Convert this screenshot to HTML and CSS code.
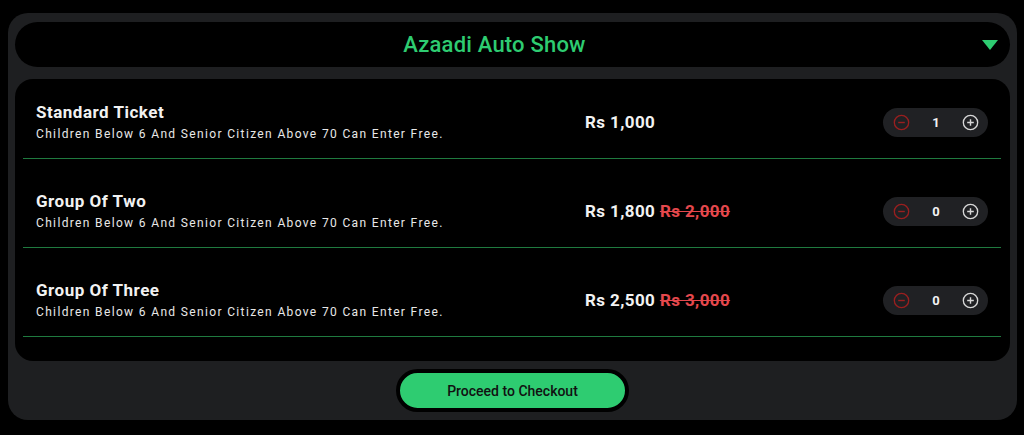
FILE: index.html
```html
<!DOCTYPE html>
<html>
<head>
<meta charset="utf-8">
<link rel="stylesheet" href="styles.css">
</head>
<body>
<div class="shell">
  <div class="event-bar">
    <span class="event-title">Azaadi Auto Show</span>
    <span class="caret"></span>
  </div>
  <div class="tickets">
    <div class="ticket">
      <div class="info">
        <div class="name">Standard Ticket</div>
        <div class="desc">Children Below 6 And Senior Citizen Above 70 Can Enter Free.</div>
      </div>
      <div class="price">Rs 1,000</div>
      <div class="stepper">
        <svg class="minus" viewBox="0 0 18 18" width="17" height="17"><circle cx="9" cy="9" r="7.6" fill="none" stroke="currentColor" stroke-width="1.4"/><path d="M5.5 9h7" stroke="currentColor" stroke-width="1.5"/></svg>
        <span class="count">1</span>
        <svg class="plus" viewBox="0 0 18 18" width="17" height="17"><circle cx="9" cy="9" r="7.6" fill="none" stroke="currentColor" stroke-width="1.4"/><path d="M5.5 9h7M9 5.5v7" stroke="currentColor" stroke-width="1.5"/></svg>
      </div>
    </div>
    <div class="ticket">
      <div class="info">
        <div class="name">Group Of Two</div>
        <div class="desc">Children Below 6 And Senior Citizen Above 70 Can Enter Free.</div>
      </div>
      <div class="price">Rs 1,800 <s class="old">Rs 2,000</s></div>
      <div class="stepper">
        <svg class="minus" viewBox="0 0 18 18" width="17" height="17"><circle cx="9" cy="9" r="7.6" fill="none" stroke="currentColor" stroke-width="1.4"/><path d="M5.5 9h7" stroke="currentColor" stroke-width="1.5"/></svg>
        <span class="count">0</span>
        <svg class="plus" viewBox="0 0 18 18" width="17" height="17"><circle cx="9" cy="9" r="7.6" fill="none" stroke="currentColor" stroke-width="1.4"/><path d="M5.5 9h7M9 5.5v7" stroke="currentColor" stroke-width="1.5"/></svg>
      </div>
    </div>
    <div class="ticket">
      <div class="info">
        <div class="name">Group Of Three</div>
        <div class="desc">Children Below 6 And Senior Citizen Above 70 Can Enter Free.</div>
      </div>
      <div class="price">Rs 2,500 <s class="old">Rs 3,000</s></div>
      <div class="stepper">
        <svg class="minus" viewBox="0 0 18 18" width="17" height="17"><circle cx="9" cy="9" r="7.6" fill="none" stroke="currentColor" stroke-width="1.4"/><path d="M5.5 9h7" stroke="currentColor" stroke-width="1.5"/></svg>
        <span class="count">0</span>
        <svg class="plus" viewBox="0 0 18 18" width="17" height="17"><circle cx="9" cy="9" r="7.6" fill="none" stroke="currentColor" stroke-width="1.4"/><path d="M5.5 9h7M9 5.5v7" stroke="currentColor" stroke-width="1.5"/></svg>
      </div>
    </div>
  </div>
  <div class="actions">
    <button class="checkout">Proceed to Checkout</button>
  </div>
</div>
</body>
</html>
```

FILE: styles.css
```css
* { box-sizing: border-box; }
html, body { margin: 0; background: #000; }
body {
  padding: 13px 7px 0 8px;
  font-family: Roboto, "Liberation Sans", sans-serif;
  color: #f2f2f2;
  height: 435px;
  overflow: hidden;
}
.shell {
  background: #1e1f21;
  border-radius: 20px;
  padding: 9px 7px 8px 7px;
  display: flex;
  flex-direction: column;
}
.event-bar {
  height: 45px;
  background: #000;
  border-radius: 23px;
  display: flex;
  align-items: center;
  padding: 0 12px 0 0;
}
.event-title {
  flex: 1;
  margin-right: 8px;
  text-align: center;
  color: #2ecc71;
  font-size: 22px;
  font-weight: 500;
  letter-spacing: 0.2px;
}
.caret {
  width: 0;
  height: 0;
  border-left: 8px solid transparent;
  border-right: 8px solid transparent;
  border-top: 10px solid #2ecc71;
}
.tickets {
  margin-top: 12px;
  background: #000;
  border-radius: 18px;
  padding: 0 9px 24px 8px;
}
.ticket {
  display: grid;
  grid-template-columns: 549px 1fr auto;
  align-items: center;
  padding: 32px 13px 16px 13px;
  border-bottom: 1px solid #1f7a3f;
}
.ticket:first-child { padding-top: 23px; }
.name {
  font-size: 17px;
  font-weight: 700;
  line-height: 20px;
  letter-spacing: 0.5px;
}
.desc {
  margin-top: 4px;
  font-size: 12px;
  line-height: 16px;
  letter-spacing: 1.35px;
  color: #e8e8e8;
}
.price {
  font-size: 17px;
  font-weight: 700;
  line-height: 20px;
  letter-spacing: 0.4px;
  white-space: nowrap;
}
.old {
  color: #e5484d;
  font-weight: 700;
}
.stepper {
  width: 105px;
  height: 29px;
  background: #202124;
  border-radius: 15px;
  display: flex;
  align-items: center;
  justify-content: space-between;
  padding: 0 9px 0 10px;
}
.stepper svg { display: block; }
.minus { color: #9a1f1f; }
.plus { color: #d8d8d8; }
.count {
  font-size: 13px;
  font-weight: 700;
}
.actions {
  display: flex;
  justify-content: center;
  padding-top: 8px;
}
.checkout {
  width: 233px;
  height: 43px;
  background: #2ecc71;
  border: 4px solid #000;
  border-radius: 22px;
  font-family: Roboto, "Liberation Sans", sans-serif;
  font-size: 14px;
  font-weight: 500;
  color: #111;
}
```
